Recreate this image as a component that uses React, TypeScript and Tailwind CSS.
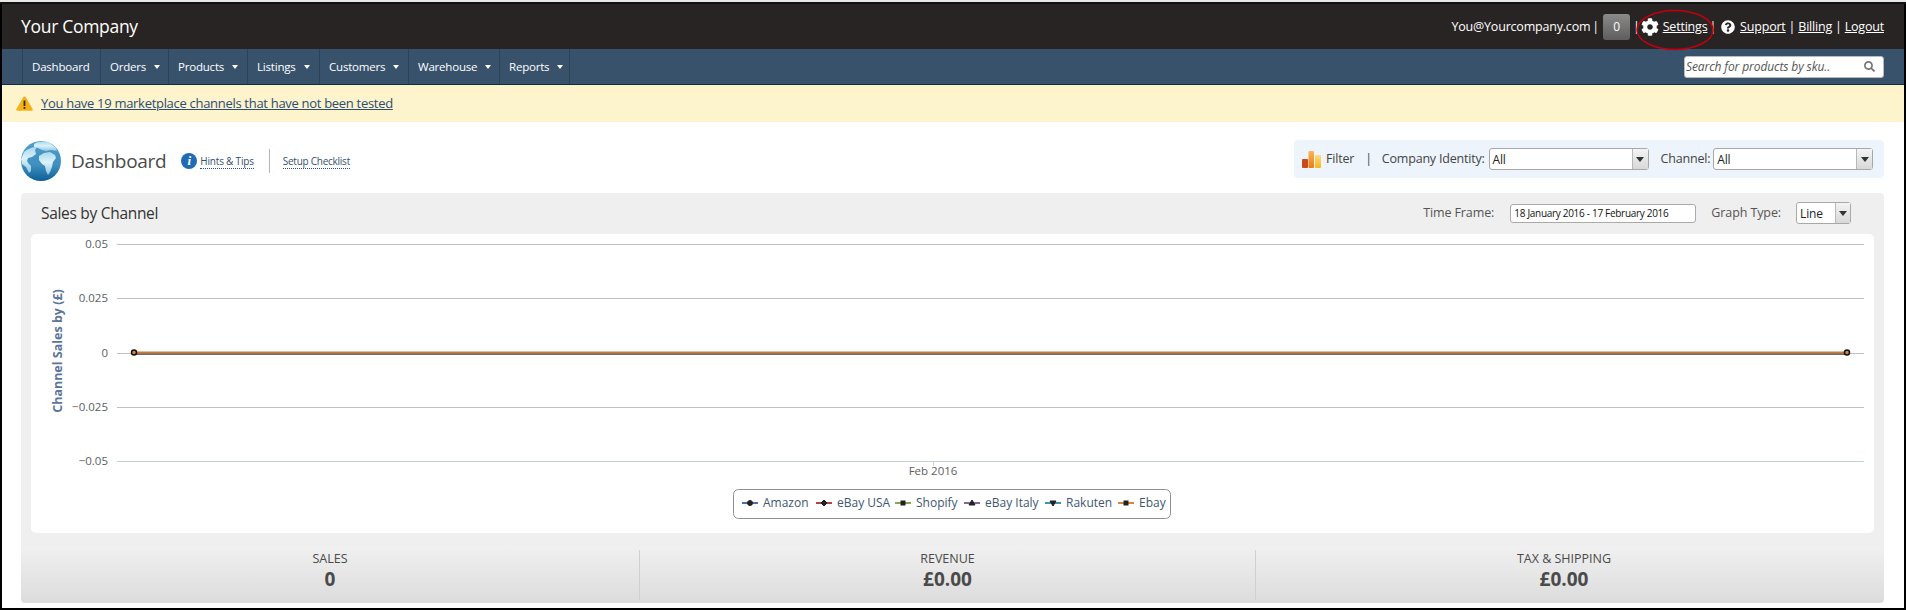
import { FaCog, FaQuestionCircle, FaSearch } from "react-icons/fa"

const navItems = [
  { label: "Dashboard", width: "w-[78px]", caret: false },
  { label: "Orders", width: "w-[68px]", caret: true },
  { label: "Products", width: "w-[79px]", caret: true },
  { label: "Listings", width: "w-[72px]", caret: true },
  { label: "Customers", width: "w-[89px]", caret: true },
  { label: "Warehouse", width: "w-[91px]", caret: true },
  { label: "Reports", width: "w-[70px]", caret: true },
]

const gridLines = [
  { y: 244.5, label: "0.05", color: "#c0c0c0" },
  { y: 298.5, label: "0.025", color: "#c0c0c0" },
  { y: 353.5, label: "0", color: "#c0c0c0" },
  { y: 407.5, label: "−0.025", color: "#c0c0c0" },
  { y: 461.5, label: "−0.05", color: "#c0d0e0" },
]

const legend = [
  { label: "Amazon", x: 742, text: 763, color: "#4572a7", marker: "circle" },
  { label: "eBay USA", x: 816, text: 837, color: "#aa4643", marker: "diamond" },
  { label: "Shopify", x: 895, text: 916, color: "#89a54e", marker: "square" },
  { label: "eBay Italy", x: 964, text: 985, color: "#80699b", marker: "triangle" },
  { label: "Rakuten", x: 1045, text: 1066, color: "#3d96ae", marker: "down" },
  { label: "Ebay", x: 1118, text: 1139, color: "#db843d", marker: "square" },
]

const stats = [
  { label: "SALES", value: "0" },
  { label: "REVENUE", value: "£0.00" },
  { label: "TAX & SHIPPING", value: "£0.00" },
]

function SelectBox({ value, width, arrow = "w-[16px]" }: { value: string; width: string; arrow?: string }) {
  return (
    <div className={`flex h-[22px] items-stretch rounded-[3px] border border-[#a8a8a8] bg-white ${width}`}>
      <span className="flex-1 pl-[3px] pt-px text-[12px] leading-[20px] text-[#222]">{value}</span>
      <span className={`flex items-center justify-center border-l border-[#b8b8b8] bg-gradient-to-b from-[#f4f4f4] to-[#d8d8d8] ${arrow}`}>
        <span className="h-0 w-0 border-x-[4px] border-t-[5px] border-x-transparent border-t-[#333]" />
      </span>
    </div>
  )
}

function Globe() {
  return (
    <svg width="40" height="40" viewBox="0 0 40 40">
      <defs>
        <linearGradient id="ocean" x1="0" y1="0" x2="0" y2="1">
          <stop offset="0" stopColor="#4f9fcb" />
          <stop offset="0.6" stopColor="#3f8fbf" />
          <stop offset="1" stopColor="#0c6096" />
        </linearGradient>
        <linearGradient id="land" x1="0" y1="0" x2="0" y2="1">
          <stop offset="0" stopColor="#a8d8ee" />
          <stop offset="0.45" stopColor="#dcf2fb" />
          <stop offset="1" stopColor="#8cc4e2" />
        </linearGradient>
      </defs>
      <circle cx="20" cy="20" r="20" fill="url(#ocean)" />
      <path
        d="M3 11c3-3 8-5 13-5l-2 3 1 4-4 3-4 1-1 3 2 3 2 2 0 5-2 2-3-6-4-3-1-5z"
        fill="url(#land)"
      />
      <path d="M18 15l5-3 6-1 5 3 1 3-3 4-1 5-2 5-2 3-2-4-1-5-3-2-3-4z" fill="url(#land)" />
      <path d="M13 3c5-3 11-3 16-1l6 5 1 3-6-1-5 1-4-1-4-2-4-1z" fill="url(#land)" />
    </svg>
  )
}

function FilterIcon() {
  return (
    <svg width="19" height="17" viewBox="0 0 19 17">
      <defs>
        <linearGradient id="bar2" x1="0" y1="0" x2="0" y2="1">
          <stop offset="0" stopColor="#fbb45c" />
          <stop offset="1" stopColor="#ea7d10" />
        </linearGradient>
        <linearGradient id="bar3" x1="0" y1="0" x2="0" y2="1">
          <stop offset="0" stopColor="#fddc80" />
          <stop offset="1" stopColor="#fbb41c" />
        </linearGradient>
      </defs>
      <rect x="0" y="8" width="6" height="9" rx="1" fill="#c8491a" />
      <rect x="6.5" y="0" width="5.5" height="17" rx="1" fill="url(#bar2)" />
      <rect x="13" y="4" width="6" height="13" rx="1" fill="url(#bar3)" />
    </svg>
  )
}

function WarningIcon() {
  return (
    <svg width="17" height="15" viewBox="0 0 17 15">
      <path d="M8.5 0.5c.6 0 1 .3 1.3.8l6.8 11.6c.5.9 0 1.9-1 1.9H1.4c-1 0-1.5-1-1-1.9L7.2 1.3c.3-.5.7-.8 1.3-.8z" fill="#f4b118" />
      <rect x="7.6" y="4.5" width="1.8" height="5.5" fill="#3a2a10" />
      <rect x="7.6" y="11" width="1.8" height="1.8" fill="#3a2a10" />
    </svg>
  )
}

function Marker({ kind, x, y }: { kind: string; x: number; y: number }) {
  const common = { fill: "#222", stroke: "#222" }
  if (kind === "circle") return <circle cx={x} cy={y} r="2.5" {...common} />
  if (kind === "square") return <rect x={x - 2} y={y - 2} width="4" height="4" {...common} />
  if (kind === "diamond") return <path d={`M${x} ${y - 3}L${x + 3} ${y}L${x} ${y + 3}L${x - 3} ${y}Z`} {...common} />
  if (kind === "triangle") return <path d={`M${x} ${y - 3}L${x + 3} ${y + 2}L${x - 3} ${y + 2}Z`} {...common} />
  return <path d={`M${x} ${y + 3}L${x + 3} ${y - 2}L${x - 3} ${y - 2}Z`} {...common} />
}

function SalesChart() {
  return (
    <svg
      className="block h-[299px] w-[1843px]"
      viewBox="31 234 1843 299"
      fontFamily="'Open Sans', sans-serif"
    >
      {gridLines.map(line => (
        <g key={line.label}>
          <line x1="117" x2="1864" y1={line.y} y2={line.y} stroke={line.color} />
          <text x="108" y={line.y + 3} textAnchor="end" fontSize="11.5" fill="#606060">
            {line.label}
          </text>
        </g>
      ))}
      <line x1="933.5" x2="933.5" y1="461" y2="466" stroke="#c0d0e0" />
      <text x="933" y="475" textAnchor="middle" fontSize="11.5" fill="#606060">
        Feb 2016
      </text>
      <text
        transform="translate(62 351) rotate(-90)"
        textAnchor="middle"
        fontSize="12.5"
        fontWeight="700"
        fill="#5b7499"
      >
        Channel Sales by (£)
      </text>

      <rect x="134" y="353" width="1713" height="2" fill="#6d6d6d" />
      <rect x="134" y="351.5" width="1713" height="2" fill="#c77a3a" />
      {[134, 1847].map(x => (
        <circle key={x} cx={x} cy="352.5" r="2.5" fill="#db843d" stroke="#111" strokeWidth="1.5" />
      ))}

      <rect x="733.5" y="489.5" width="437" height="29" rx="5" fill="#fff" stroke="#909090" />
      {legend.map(item => (
        <g key={item.label}>
          <line x1={item.x} x2={item.x + 16} y1="503" y2="503" stroke={item.color} strokeWidth="2" />
          <Marker kind={item.marker} x={item.x + 8} y={503} />
          <text x={item.text} y="507" fontSize="12" fontWeight="500" fill="#3e576f">
            {item.label}
          </text>
        </g>
      ))}
    </svg>
  )
}

export default function App() {
  return (
    <div className="h-[610px] w-[1906px] overflow-hidden bg-black font-['Open_Sans',sans-serif]">
      <div className="h-[2px] bg-[#e8e8e8]" />
      <div className="h-[2px] bg-[#111]" />
      <div className="ml-[2px] mr-[2px] h-[604px] bg-white">
        <header className="relative flex h-[45px] items-center justify-between bg-[#282423] pl-[19px] pr-[20px] text-white">
          <span className="text-[17.5px] tracking-[-0.3px]">Your Company</span>
          <div className="flex items-center pt-px text-[12.5px] tracking-[-0.2px]">
            <span>You@Yourcompany.com</span>
            <span className="mx-[2px]">|</span>
            <span className="mx-[2px] flex h-[26px] w-[27px] items-center justify-center rounded-[3px] bg-gradient-to-b from-[#8a8a8a] to-[#5e5e5e] text-[12px]">
              0
            </span>
            <span className="ml-[1px] mr-[1px]">|</span>
            <FaCog className="mr-[2px] text-[18px]" />
            <span className="ml-[2px] underline">Settings</span>
            <span className="mx-[2px]">|</span>
            <FaQuestionCircle className="mx-[3px] text-[14px]" />
            <span className="ml-[2px] underline">Support</span>
            <span className="mx-[3px]">|</span>
            <span className="underline">Billing</span>
            <span className="mx-[3px]">|</span>
            <span className="underline">Logout</span>
          </div>
          <svg className="absolute left-[1633px] top-[5px] h-[42px] w-[80px]" viewBox="0 0 80 42">
            <ellipse cx="40" cy="21" rx="38" ry="19.5" fill="none" stroke="#c00010" strokeWidth="1.5" />
          </svg>
        </header>

        <nav className="flex h-[36px] items-stretch justify-between border-b border-[#0e2b45] bg-[#38526c] pl-[20px] pr-[20px]">
          <div className="flex border-l border-[#2b4359]">
            {navItems.map(item => (
              <a
                key={item.label}
                className={`flex items-center border-r border-[#2b4359] pl-[9px] text-[11.5px] tracking-[-0.2px] text-white ${item.width}`}
              >
                {item.label}
                {item.caret && (
                  <span className="ml-[8px] h-0 w-0 border-x-[3px] border-t-[4px] border-x-transparent border-t-white" />
                )}
              </a>
            ))}
          </div>
          <div className="flex items-center">
            <div className="flex h-[22px] w-[200px] items-center justify-between rounded-[3px] border border-[#bbb] bg-white pl-[1px] pr-[8px]">
              <span className="text-[12px] italic tracking-[-0.1px] text-[#555]">Search for products by sku..</span>
              <FaSearch className="text-[11px] text-[#777]" />
            </div>
          </div>
        </nav>

        <div className="flex h-[37px] items-center gap-[8px] bg-[#fdf3cc] pl-[14px]">
          <WarningIcon />
          <a className="text-[13px] tracking-[-0.3px] text-[#2c4d73] underline">
            You have 19 marketplace channels that have not been tested
          </a>
        </div>

        <div className="flex h-[71px] items-start justify-between pl-[19px] pr-[20px] pt-[19px]">
          <div className="flex items-center">
            <Globe />
            <h1 className="ml-[10px] text-[19px] tracking-[-0.3px] text-[#4a4a4a]">Dashboard</h1>
            <span className="ml-[15px] flex h-[16px] w-[16px] items-center justify-center rounded-full bg-[#1f6bb5] font-['Liberation_Serif',serif] text-[13px] font-bold italic text-white">
              i
            </span>
            <a className="ml-[3px] border-b border-dotted border-[#1f4f8a] text-[10px] leading-[14px] tracking-[-0.2px] text-[#34506e]">
              Hints &amp; Tips
            </a>
            <span className="ml-[15px] h-[24px] w-px bg-[#b4aee4]" />
            <a className="ml-[13px] border-b border-dotted border-[#1f4f8a] text-[10px] leading-[14px] tracking-[-0.25px] text-[#34506e]">
              Setup Checklist
            </a>
          </div>
          <div className="-mt-[1px] flex h-[38px] w-[590px] items-center rounded-[4px] bg-[#edf4fc] pl-[8px] text-[12.5px] tracking-[-0.2px] text-[#444]">
            <FilterIcon />
            <span className="ml-[5px]">Filter</span>
            <span className="ml-[11px]">|</span>
            <span className="ml-[10px]">Company Identity:</span>
            <div className="ml-[4px]">
              <SelectBox value="All" width="w-[160px]" />
            </div>
            <span className="ml-[12px]">Channel:</span>
            <div className="ml-[3px]">
              <SelectBox value="All" width="w-[160px]" />
            </div>
          </div>
        </div>

        <section className="mx-[19px] w-[1863px]">
          <div className="rounded-t-[4px] bg-[#efefef] px-[10px] pb-[14px]">
            <div className="flex h-[41px] items-center justify-between">
              <h2 className="pl-[10px] pt-px text-[15.5px] tracking-[-0.3px] text-[#333]">Sales by Channel</h2>
              <div className="flex items-center pr-[23px] text-[12.5px] tracking-[-0.1px] text-[#555]">
                <span>Time Frame:</span>
                <div className="ml-[16px] flex h-[19px] w-[186px] items-center rounded-[3px] border border-[#aaa] bg-white pl-[3px] text-[10px] tracking-[-0.3px] text-[#111]">
                  18 January 2016 - 17 February 2016
                </div>
                <span className="ml-[15px]">Graph Type:</span>
                <div className="-mt-px ml-[15px]">
                  <SelectBox value="Line" width="w-[55px]" arrow="w-[15px]" />
                </div>
              </div>
            </div>
            <div className="overflow-hidden rounded-[5px] bg-white">
              <SalesChart />
            </div>
          </div>
          <div className="grid h-[56px] grid-cols-[618px_616px_629px] rounded-b-[4px] bg-gradient-to-b from-[#f0f0f0] to-[#dcdcdc]">
            {stats.map((stat, i) => (
              <div
                key={stat.label}
                className={`my-[3px] flex flex-col items-center text-[#4a4a4a] ${i > 0 ? "border-l border-[#d0d0d0]" : ""} ${i === 2 ? "pr-[12px]" : ""}`}
              >
                <span className="text-[12.5px] leading-[17px]">{stat.label}</span>
                <span className="text-[19px] font-bold leading-[24px]">{stat.value}</span>
              </div>
            ))}
          </div>
        </section>
      </div>
    </div>
  )
}
